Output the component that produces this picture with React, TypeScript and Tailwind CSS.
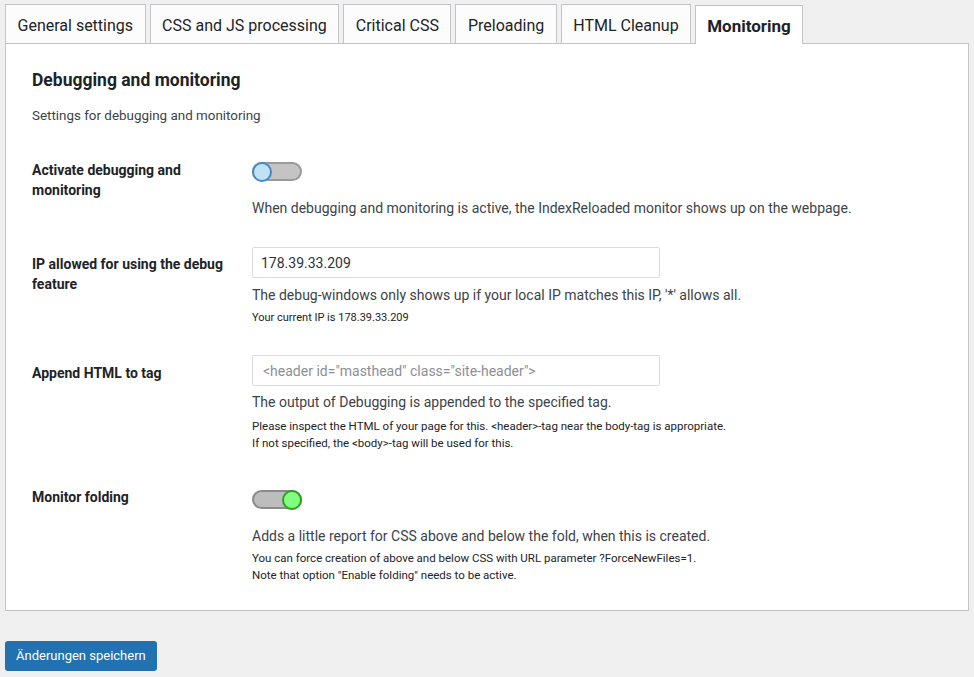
import { useState } from "react"

const TABS = ["General settings", "CSS and JS processing", "Critical CSS", "Preloading", "HTML Cleanup", "Monitoring"]

function Toggle({ on, onChange }: { on: boolean; onChange: () => void }) {
  return (
    <button
      type="button"
      onClick={onChange}
      className={`flex h-[19px] w-[50px] items-center rounded-full border-2 ${
        on ? "justify-end border-[#8a8a8a] bg-[#bdbdbd]" : "justify-start border-[#9a9a9a] bg-[#c4c4c4]"
      }`}
    >
      <span
        className={`-m-[2px] block h-[20px] w-[20px] rounded-full border-2 ${
          on ? "border-[#2ea01c] bg-[#80ff80]" : "border-[#4a86c5] bg-[#bde3f5]"
        }`}
      />
    </button>
  )
}

function Row({
  label,
  children,
  labelTop,
  fieldTop,
}: {
  label: string
  children: React.ReactNode
  labelTop: string
  fieldTop: string
}) {
  return (
    <div className="flex">
      <div className={`w-[220px] shrink-0 pr-[15px] text-[14px] font-bold leading-[20px] text-[#1d2327] ${labelTop}`}>
        {label}
      </div>
      <div className={`flex-1 ${fieldTop}`}>{children}</div>
    </div>
  )
}

export default function App() {
  const [debug, setDebug] = useState(false)
  const [folding, setFolding] = useState(true)
  const [ip, setIp] = useState("178.39.33.209")
  const [tag, setTag] = useState("")

  return (
    <div className="min-h-screen bg-[#f0f0f1] px-[5px] pt-[4px] pb-[6px] font-['Roboto',_'Noto_Sans',_sans-serif] text-[#3c434a]">
      <div className="flex items-end gap-[4px]">
        {TABS.map((t) =>
          t === "Monitoring" ? (
            <div
              key={t}
              className="relative z-10 -mb-px flex h-[39px] items-center border border-b-0 border-[#c3c4c7] bg-white px-[11px] pt-[3px] text-[17px] font-bold text-[#1d2327]"
            >
              {t}
            </div>
          ) : (
            <div
              key={t}
              className="flex h-[39px] items-center border border-b-0 border-[#c3c4c7] bg-[#fcfcfc] px-[11.5px] pt-[3px] text-[16px] text-[#1d2327]"
            >
              {t}
            </div>
          )
        )}
      </div>

      <div className="border border-[#c3c4c7] bg-white pl-[26px] pr-[20px] pt-[24px] pb-[26px]">
        <h2 className="text-[17.5px] font-bold leading-[24px] text-[#1d2327]">Debugging and monitoring</h2>
        <p className="mt-[15px] text-[13.4px] leading-[18px] text-[#3c434a]">Settings for debugging and monitoring</p>

        <div className="mt-[13px]">
          <Row label="Activate debugging and monitoring" labelTop="pt-[22px]" fieldTop="pt-[24px] pb-[16px]">
            <Toggle on={debug} onChange={() => setDebug(!debug)} />
            <p className="mt-[17px] text-[14px] leading-[20px]">
              When debugging and monitoring is active, the IndexReloaded monitor shows up on the webpage.
            </p>
          </Row>

          <Row label="IP allowed for using the debug feature" labelTop="pt-[20px]" fieldTop="pt-[13px] pb-[16px]">
            <input
              value={ip}
              onChange={(e) => setIp(e.target.value)}
              className="h-[31px] w-[408px] rounded-[2px] border border-[#dcdcde] px-[8px] text-[14px] text-[#2c3338] outline-none"
            />
            <p className="mt-[7px] text-[14px] leading-[20px]">
              The debug-windows only shows up if your local IP matches this IP, '*' allows all.
            </p>
            <p className="mt-[4px] text-[11px] leading-[17px] text-[#1d2327]">Your current IP is 178.39.33.209</p>
          </Row>

          <Row label="Append HTML to tag" labelTop="pt-[21px]" fieldTop="pt-[13px] pb-[15px]">
            <input
              value={tag}
              onChange={(e) => setTag(e.target.value)}
              placeholder={'<header id="masthead" class="site-header">'}
              className="h-[31px] w-[408px] rounded-[2px] border border-[#dcdcde] px-[10px] text-[14px] text-[#2c3338] outline-none placeholder:text-[#8c8f94]"
            />
            <p className="mt-[6px] text-[14px] leading-[20px]">The output of Debugging is appended to the specified tag.</p>
            <p className="mt-[6px] text-[11.5px] leading-[17px] text-[#1d2327]">
              Please inspect the HTML of your page for this. &lt;header&gt;-tag near the body-tag is appropriate.
              <br />
              If not specified, the &lt;body&gt;-tag will be used for this.
            </p>
          </Row>

          <Row label="Monitor folding" labelTop="pt-[20px]" fieldTop="pt-[23px]">
            <Toggle on={folding} onChange={() => setFolding(!folding)} />
            <p className="mt-[17px] text-[14px] leading-[20px]">
              Adds a little report for CSS above and below the fold, when this is created.
            </p>
            <p className="mt-[4px] text-[11.5px] leading-[17px] text-[#1d2327]">
              You can force creation of above and below CSS with URL parameter ?ForceNewFiles=1.
              <br />
              Note that option "Enable folding" needs to be active.
            </p>
          </Row>
        </div>
      </div>

      <button
        type="button"
        className="mt-[30px] h-[30px] rounded-[3px] bg-[#2271b1] px-[11px] text-[13px] text-white hover:bg-[#135e96]"
      >
        Änderungen speichern
      </button>
    </div>
  )
}
